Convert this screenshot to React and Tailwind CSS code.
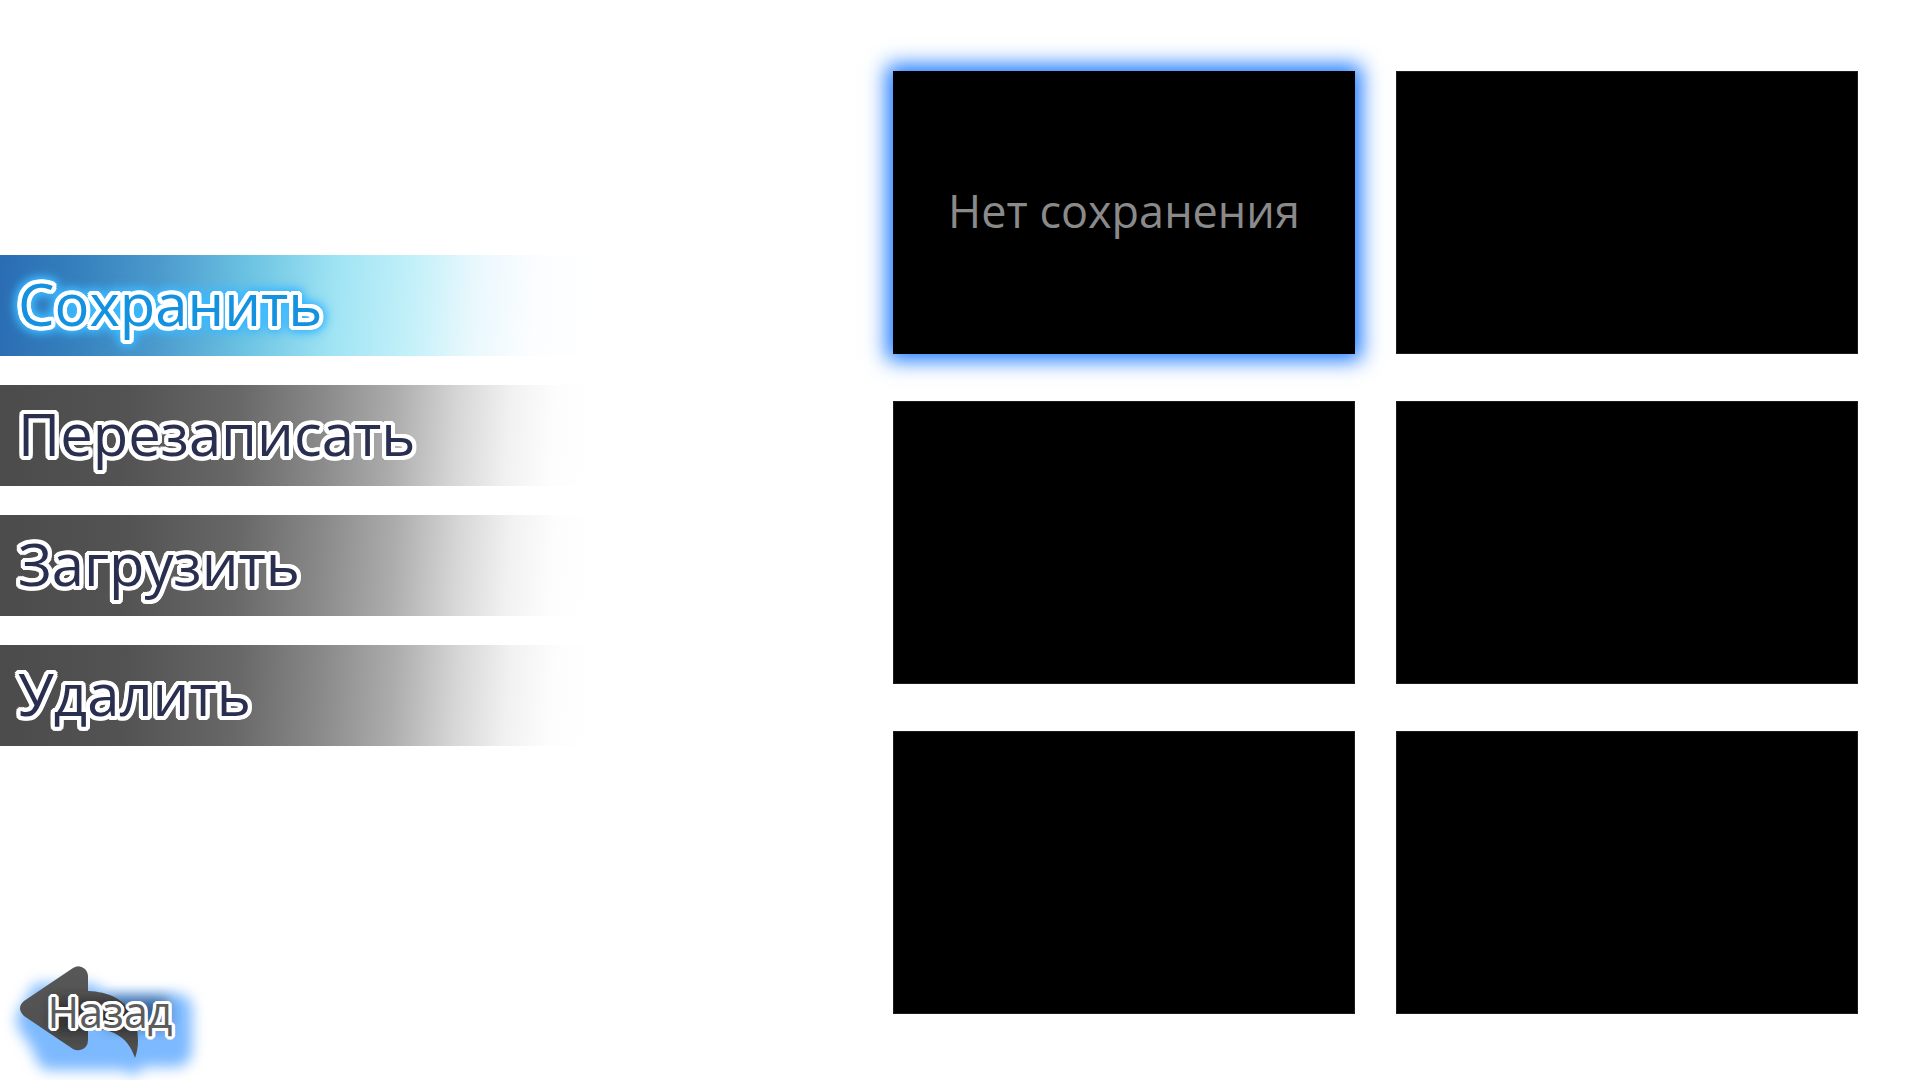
const MENU = [
  { label: "Сохранить", active: true },
  { label: "Перезаписать" },
  { label: "Загрузить" },
  { label: "Удалить" },
];

const SLOTS = [1, 2, 3, 4, 5, 6];

const THICK_OUTLINE =
  "[text-shadow:4px_0_white,-4px_0_white,0_4px_white,0_-4px_white,3px_3px_white,-3px_3px_white,3px_-3px_white,-3px_-3px_white,4px_2px_white,-4px_2px_white,4px_-2px_white,-4px_-2px_white,2px_4px_white,-2px_4px_white,2px_-4px_white,-2px_-4px_white]";

const THIN_OUTLINE =
  "[text-shadow:3px_0_white,-3px_0_white,0_3px_white,0_-3px_white,2px_2px_white,-2px_2px_white,2px_-2px_white,-2px_-2px_white,3px_1px_white,-3px_1px_white,3px_-1px_white,-3px_-1px_white,1px_3px_white,-1px_3px_white,1px_-3px_white,-1px_-3px_white]";

function MenuItem({ label, active }) {
  const bar = active
    ? "bg-[linear-gradient(94deg,#2b6cb3_0px,#3580bd_78px,#4c9bcd_162px,#6cc3e2_250px,#a0e4f4_338px,#c2f0f9_412px,#eaf8fd_478px,#fbfdff_535px,#ffffff_600px)]"
    : "bg-[linear-gradient(94deg,#4b4b4b_0px,#535353_130px,#686868_240px,#888888_320px,#acacac_395px,#d6d6d6_458px,#f1f1f1_510px,#fdfdfd_555px,#ffffff_600px)]";
  const text = active
    ? "text-[#1592df] [filter:drop-shadow(0_0_5px_#3cb8ff)_drop-shadow(0_0_5px_#3cb8ff)]"
    : "text-[#2a2f50]";
  return (
    <button type="button" className={`flex h-[101px] w-full items-center pl-[18px] ${bar}`}>
      <span className={`whitespace-nowrap pb-1 text-[58px] leading-none font-normal ${THICK_OUTLINE} ${text}`}>
        {label}
      </span>
    </button>
  );
}

function BackButton() {
  return (
    <button type="button" className="relative h-[130px] w-[200px]">
      <svg viewBox="0 0 200 130" className="absolute inset-0 h-full w-full overflow-visible" aria-hidden="true">
        <defs>
          <filter id="soft" x="-20%" y="-30%" width="140%" height="160%">
            <feGaussianBlur stdDeviation="7" />
          </filter>
          <filter id="shade" x="-20%" y="-40%" width="140%" height="180%">
            <feGaussianBlur stdDeviation="7" />
          </filter>
          <linearGradient id="body" x1="0" y1="0" x2="0" y2="1">
            <stop offset="0" stopColor="#5a5a5a" />
            <stop offset="1" stopColor="#4a4a4a" />
          </linearGradient>
          <clipPath id="arrow">
            <path d="M24 51 L73 18 Q79 14 85 19 Q88 22 88 27 V41 C114 42 137 54 138 90 Q138 100 135 108 C127 84 110 79 88 78 V90 Q88 98 80 100 Q77 101 73 99 L24 66 Q16 58 24 51 Z" />
          </clipPath>
        </defs>
        <g fill="#7db9ff" filter="url(#soft)">
          <path d="M34 34 H92 L108 44 H178 Q192 46 192 60 V98 Q192 117 174 117 H142 L136 126 L122 120 H44 Q36 112 32 98 L18 78 Q14 62 24 54 Z" />
        </g>
        <path d="M106 48 H168 V78 H106 Z" fill="#1b3c68" opacity="0.7" filter="url(#shade)" />
        <g clipPath="url(#arrow)">
          <rect width="200" height="130" fill="url(#body)" />
          <rect x="54" y="50" width="100" height="32" fill="#202020" opacity="0.7" filter="url(#shade)" />
        </g>
      </svg>
      <span
        className={`relative flex justify-center pl-5 pb-2 text-[43px] leading-none text-[#5c5c5c] ${THIN_OUTLINE}`}
      >
        Назад
      </span>
    </button>
  );
}

export default function App() {
  return (
    <div className="flex min-h-screen w-full overflow-hidden bg-white font-['Open_Sans',sans-serif]">
      <nav aria-label="Меню" className="flex w-[893px] shrink flex-col pt-[255px]">
        <div className="flex w-[600px] max-w-full flex-col gap-[29px]">
          {MENU.map((item) => (
            <MenuItem key={item.label} {...item} />
          ))}
        </div>
        <div className="mt-auto">
          <BackButton />
        </div>
      </nav>
      <main className="grid flex-1 grid-cols-2 content-start gap-x-[41px] gap-y-[47px] pt-[71px] pr-[62px]">
        {SLOTS.map((slot) => (
          <button
            key={slot}
            type="button"
            aria-label={slot === 1 ? "Слот 1: Нет сохранения" : `Слот ${slot}`}
            className={
              slot === 1
                ? "flex aspect-[462/283] items-center justify-center bg-black shadow-[0_0_20px_6px_#1475ff]"
                : "flex aspect-[462/283] items-center justify-center border border-[#1c1c1c] bg-black"
            }
          >
            {slot === 1 && (
              <span className="whitespace-nowrap pb-1 text-[45px] leading-none font-normal text-[#8a8a8a]">
                Нет сохранения
              </span>
            )}
          </button>
        ))}
      </main>
    </div>
  );
}
